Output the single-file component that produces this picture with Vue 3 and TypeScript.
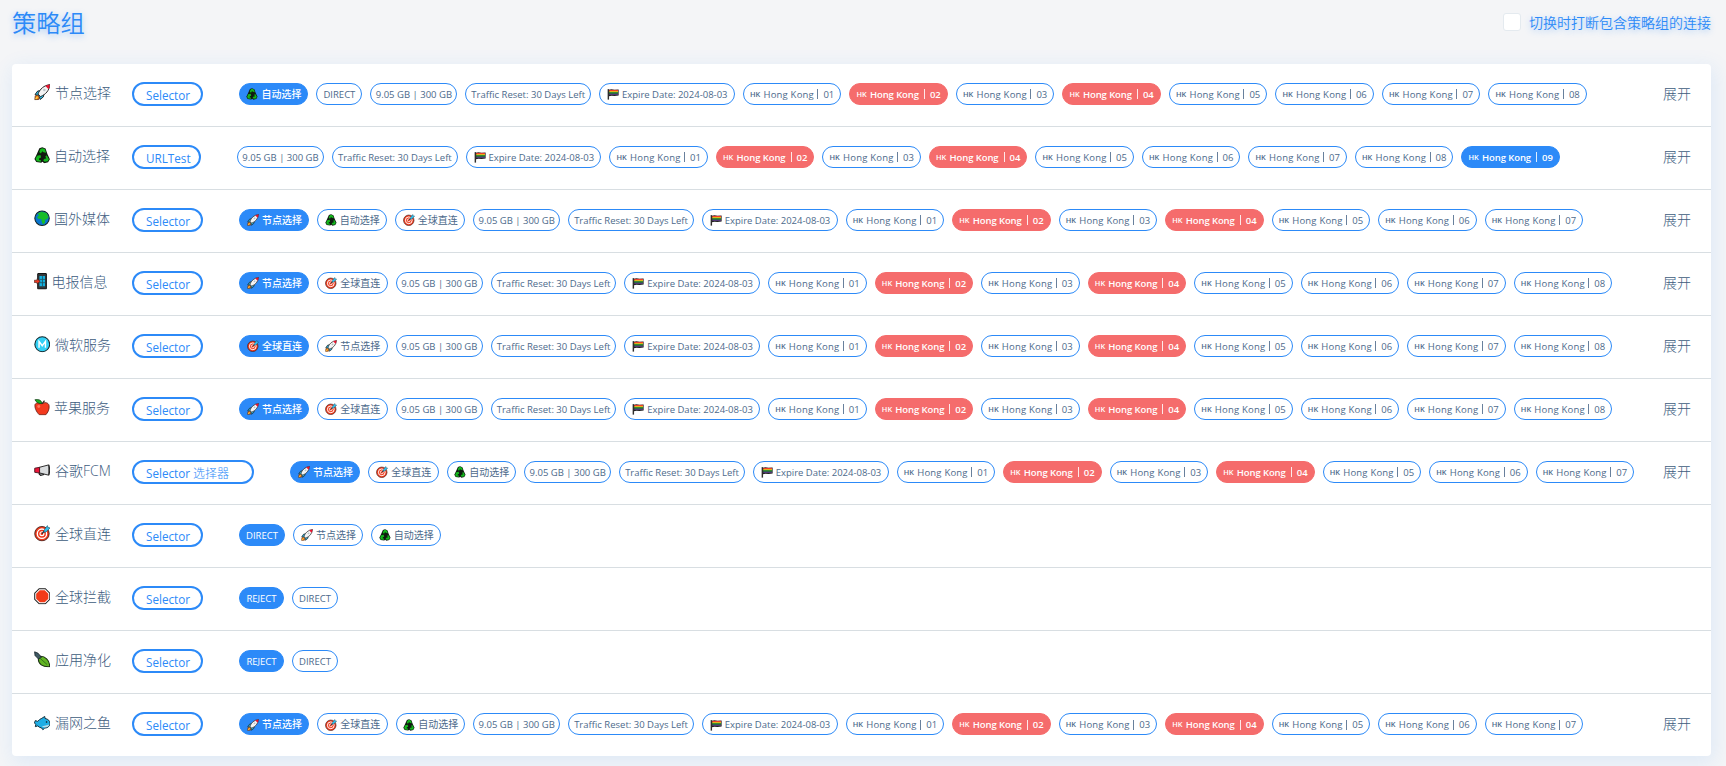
<script setup lang="ts">
type Kind = 'rocket' | 'cycle' | 'target' | 'direct' | 'reject' | 'usage' | 'reset' | 'expire' | 'hk'
interface Proxy { kind: Kind; text: string; state: '' | 'active' | 'error' }
interface Group { icon: string; name: string; type: string; extra?: string; proxies: Proxy[]; more: boolean }

const labels: Record<string, string> = {
  rocket: '节点选择',
  cycle: '自动选择',
  target: '全球直连',
  direct: 'DIRECT',
  reject: 'REJECT',
  usage: '9.05 GB | 300 GB',
  reset: 'Traffic Reset: 30 Days Left',
  expire: 'Expire Date: 2024-08-03',
}
const withIcon: Record<string, string> = { rocket: 'rocket', cycle: 'cycle', target: 'target', expire: 'flag' }

function build(kinds: Kind[], hkCount: number, active: number): Proxy[] {
  const list: Proxy[] = kinds.map((kind) => ({ kind, text: labels[kind], state: '' }))
  for (let i = 1; i <= hkCount; i++) {
    list.push({ kind: 'hk', text: '0' + i, state: i === 2 || i === 4 ? 'error' : '' })
  }
  list[active].state = 'active'
  return list
}
const info: Kind[] = ['usage', 'reset', 'expire']

const groups: Group[] = [
  { icon: 'rocket', name: '节点选择', type: 'Selector', proxies: build(['cycle', 'direct', ...info], 8, 0), more: true },
  { icon: 'cycle', name: '自动选择', type: 'URLTest', proxies: build([...info], 9, 11), more: true },
  { icon: 'globe', name: '国外媒体', type: 'Selector', proxies: build(['rocket', 'cycle', 'target', ...info], 7, 0), more: true },
  { icon: 'phone', name: '电报信息', type: 'Selector', proxies: build(['rocket', 'target', ...info], 8, 0), more: true },
  { icon: 'metro', name: '微软服务', type: 'Selector', proxies: build(['target', 'rocket', ...info], 8, 0), more: true },
  { icon: 'apple', name: '苹果服务', type: 'Selector', proxies: build(['rocket', 'target', ...info], 8, 0), more: true },
  { icon: 'horn', name: '谷歌FCM', type: 'Selector', extra: '选择器', proxies: build(['rocket', 'target', 'cycle', ...info], 7, 0), more: true },
  { icon: 'target', name: '全球直连', type: 'Selector', proxies: build(['direct', 'rocket', 'cycle'], 0, 0), more: false },
  { icon: 'stop', name: '全球拦截', type: 'Selector', proxies: build(['reject', 'direct'], 0, 0), more: false },
  { icon: 'leaf', name: '应用净化', type: 'Selector', proxies: build(['reject', 'direct'], 0, 0), more: false },
  { icon: 'fish', name: '漏网之鱼', type: 'Selector', proxies: build(['rocket', 'target', 'cycle', ...info], 7, 0), more: true },
]
</script>

<template>
  <div class="page">
    <svg class="defs" aria-hidden="true">
      <symbol id="rocket" viewBox="0 0 16 16">
        <path d="M1 10.2 3.6 6.8 7 6.4 9.6 9 9.2 12.4 6 15 5 12 3.8 11z" fill="#2cc3f2" stroke="#1b1b1b" stroke-width=".9" />
        <path d="M3.8 9.8C5.8 4.8 9.6 1.3 15.4.6 14.8 6.2 11.4 10.2 6.4 12.2z" fill="#f3f3f3" stroke="#1b1b1b" stroke-width=".9" />
        <path d="M11 1.9Q13.3.9 15.4.6 15.1 3 14.2 5z" fill="#e8112d" />
        <path d="M1.2 11.4 3.6 11 5.2 12.6 4.6 15 .8 15.2z" fill="#f7811c" stroke="#502a10" stroke-width=".7" />
        <path d="M1.6 14.5 3.4 12.5" stroke="#fde04a" stroke-width="1" />
        <circle cx="10" cy="5.8" r="1.2" fill="#b9c2c8" />
      </symbol>
      <symbol id="cycle" viewBox="0 0 16 16">
        <path d="M5.2 1.2 8 .3l3.2 1.2 1.8 5.2 2.4 5.1-1.7 2.9-3.8 1-1.7-1.5-1.2 1-4.8-.6-1.8-3 1.8-3.6z" fill="#101b10" />
        <g fill="#14b81c">
          <path d="M5 4.9 6.2 1.9 8 1.1l2.4.9 1.4 3.5-2.6-.4L8 4 6.7 6.4z" />
          <path d="M1.5 11.5 3 8.4l3.3-.6.6 2.5-1.8.7-.2 1.5 1.7.2v1.6l-3.9-.4z" />
          <path d="m12.3 8 2.2 3.8-1.2 2.1-3 .4-1.4-1.4 1.4-1.6 1.6-.1-.9-2.1z" />
        </g>
      </symbol>
      <symbol id="globe" viewBox="0 0 16 16">
        <circle cx="7.8" cy="8" r="7" fill="#0875cf" stroke="#102020" stroke-width="1" />
        <path d="M3.3 3.6 7 1.7l5.2 1.2L14.1 7l-1.9 2.3-1.4-.2-.2 3.2-2 1.7-1.2-3-.2-2-2.9-.5L3 7 4.9 5.2z" fill="#16bd27" />
      </symbol>
      <symbol id="target" viewBox="0 0 16 16">
        <circle cx="7.7" cy="8.4" r="7" fill="#f03a1b" stroke="#391a16" stroke-width=".8" />
        <circle cx="7.7" cy="8.4" r="4.5" fill="none" stroke="#fff" stroke-width="1.3" />
        <circle cx="7.7" cy="8.4" r="1.9" fill="none" stroke="#fff" stroke-width="1.1" />
        <path d="m7.7 8.4 4.1-4" stroke="#152b33" stroke-width="1.2" />
        <path d="M9.8 4.8 13 .6l.5 1.8 2.1.4-3.9 4L9.5 7z" fill="#35bdea" stroke="#0e4350" stroke-width=".5" />
      </symbol>
      <symbol id="phone" viewBox="0 0 16 16">
        <rect x="3.6" y=".5" width="8.4" height="15" rx=".8" fill="#34393c" stroke="#151515" />
        <path d="M5.3 3h5.4v9.8H5.3z" fill="#13b0df" />
        <path d="M5.3 6.2h5.4M5.3 9.4h5.4M8.2 3v9.8" stroke="#215261" stroke-width=".8" />
        <path d="M.3 7h2.6V5.6L6 8.1l-3.1 2.5V9.2H.3z" fill="#ef3922" stroke="#43211c" stroke-width=".6" />
      </symbol>
      <symbol id="metro" viewBox="0 0 16 16">
        <circle cx="8" cy="8" r="7.2" fill="#32d0f5" stroke="#11252a" />
        <path d="M4.9 11.3V5.2L8 9.4l3.1-4.2v6.1" fill="none" stroke="#fff" stroke-width="1.4" />
      </symbol>
      <symbol id="apple" viewBox="0 0 16 16">
        <path d="M7.8 4.5C10 3 13.8 3 14.6 6.3c.6 3.8-1.3 7-3.2 9H5.2C2.1 12.5.4 8 1 5.4 2.4 2.8 5.7 3.6 7.8 4.5z" fill="#f33a1e" stroke="#651b12" stroke-width=".8" />
        <path d="M8 4.5Q3 4.8.9.7 6.7-.5 8 4.5z" fill="#16ad20" stroke="#123c15" stroke-width=".7" />
        <path d="M8 4.5 10.2 1.6" stroke="#342019" stroke-width="1.2" />
        <circle cx="4.6" cy="7.3" r="1.4" fill="#ff775c" />
      </symbol>
      <symbol id="horn" viewBox="0 0 16 16">
        <path d="M5 10.3h4.4v1.9l-3 .8L5 11.6z" fill="#a8adb0" stroke="#191919" />
        <path d="M5 5.2 14.3 2.8v10L5 10.5z" fill="#d9dcde" stroke="#222" stroke-width=".9" />
        <path d="M5.4 5.2v5.5L.7 10V6z" fill="#ed1538" stroke="#4d1720" stroke-width=".9" />
        <path d="M14.3 2.8q1.8 5 0 10" fill="#888" stroke="#222" />
      </symbol>
      <symbol id="stop" viewBox="0 0 16 16">
        <path d="M5 .7h6L15.3 5v6L11 15.3H5L.7 11V5z" fill="#fff" stroke="#1d1d1d" />
        <path d="M5.6 2.1h4.8l3.5 3.5v4.8l-3.5 3.5H5.6l-3.5-3.5V5.6z" fill="#f23a18" />
      </symbol>
      <symbol id="leaf" viewBox="0 0 16 16">
        <path d="M5.4 5.2C10.6 4.6 15.2 8.8 15.2 15.2 8.3 15.7 4 12.6 4.2 7.4z" fill="#62b522" stroke="#1d3115" />
        <path d="M.6.8 4 2.2l3.2 4-2.8 1.6L1 4.4z" fill="#405a64" stroke="#162329" stroke-width=".8" />
        <path d="M5 6.3 12.8 13.2" stroke="#2f661b" stroke-width=".8" />
      </symbol>
      <symbol id="fish" viewBox="0 0 16 16">
        <path d="M3.6 6.2Q5.4 3.9 7.6 3.2L10.4 1.4 10.7 3.3Q15.4 4.4 15.6 8.2 15 12.4 10.4 12.7L8.6 14.3 7.4 12.6Q5 12.1 3.6 10.6L1.3 11.3 1.7 9.2.4 7.6 1.3 5.4z" fill="#20aee5" stroke="#102630" stroke-width=".9" />
        <path d="M7.4 11.2 15 9.2Q14 12.1 10.3 12.2z" fill="#b6dce9" />
        <circle cx="12.2" cy="6.8" r=".8" fill="#111" />
      </symbol>
      <symbol id="flag" viewBox="0 0 16 16">
        <path d="M1.8 1.5V15.5" stroke="#302e2c" stroke-width="1.9" />
        <path d="M2.5 2.2 6 1.8l4 .5 5.5-.4v8.2l-5.5.4-4-.3-3.5.9z" fill="#211f20" />
        <path d="M3 3.4h11.7" stroke="#ef3e28" stroke-width="1.7" />
        <path d="M3 5h11.7" stroke="#f6c81b" stroke-width="1.7" />
        <path d="M3 6.7h11.7" stroke="#19a63b" stroke-width="1.7" />
        <path d="M3 8.4h11.7" stroke="#5c3c86" stroke-width="1.5" />
      </symbol>
    </svg>

    <header class="header">
      <h1 class="title">策略组</h1>
      <label class="option"><span class="checkbox"></span><span class="option-text">切换时打断包含策略组的连接</span></label>
    </header>

    <main class="card">
      <section v-for="group in groups" :key="group.name" class="row">
        <div class="name">
          <svg class="name-icon" :class="'icon-' + group.icon"><use :href="'#' + group.icon" /></svg>
          <span>{{ group.name }}</span>
        </div>
        <div class="type" :class="{ long: group.extra, url: group.type === 'URLTest' }">
          {{ group.type }}<span v-if="group.extra" class="extra">{{ group.extra }}</span>
        </div>
        <div class="proxies">
          <div v-for="(proxy, i) in group.proxies" :key="i" class="pill" :class="[proxy.kind, proxy.state]">
            <svg v-if="withIcon[proxy.kind]" class="pill-icon"><use :href="'#' + withIcon[proxy.kind]" /></svg>
            <template v-if="proxy.kind === 'hk'">
              <span class="region">HK</span><span class="place">Hong Kong</span><span class="bar"></span><span>{{ proxy.text }}</span>
            </template>
            <span v-else class="label">{{ proxy.text }}</span>
          </div>
        </div>
        <div v-if="group.more" class="more">展开</div>
      </section>
    </main>
  </div>
</template>

<style>
body {
  background: #f4f5f7;
}
</style>

<style scoped>
.page {
  box-sizing: border-box;
  height: 766px;
  padding: 0 15px 0 12px;
  overflow: hidden;
  background: #f4f5f7;
  color: #4d6a8b;
  font-family: "Open Sans", "Noto Sans", "Noto Sans CJK SC", sans-serif;
  font-weight: 400;
}
.defs {
  display: block;
  width: 0;
  height: 0;
}
.header {
  display: flex;
  justify-content: space-between;
  height: 64px;
  color: #2c8af8;
  text-shadow: 0 2px 6px rgba(44, 138, 248, 0.4);
}
.title {
  margin: 6px 0 0;
  font-family: "Noto Sans CJK SC", sans-serif;
  font-size: 24.3px;
  font-weight: 350;
  line-height: 32px;
}
.option {
  display: flex;
  align-items: center;
  height: 44px;
  font-family: "Noto Sans CJK SC", sans-serif;
  font-size: 14px;
  font-weight: 350;
}
.option-text {
  margin-top: -1px;
}
.checkbox {
  box-sizing: border-box;
  width: 18px;
  height: 18px;
  margin-right: 8px;
  border: 1px solid #e4eaef;
  border-radius: 3px;
  background: #fff;
}
.card {
  border-radius: 4px;
  background: #fff;
  box-shadow: 2px 5px 20px 2px rgba(44, 138, 248, 0.1);
}
.row {
  display: flex;
  align-items: center;
  box-sizing: border-box;
  height: 63px;
  padding: 0 20px 3px 21px;
  border-bottom: 1px solid #d8dee2;
}
.row:last-child {
  height: 62px;
  padding-bottom: 2px;
  border-bottom: 0;
}
.name {
  display: flex;
  align-items: center;
  flex: none;
  width: 99px;
  margin-top: -2px;
  color: #3d5c80;
  font-size: 14px;
  font-weight: 300;
  line-height: 20px;
  white-space: nowrap;
}
.name-icon {
  flex: none;
  width: 16.5px;
  height: 16.5px;
  margin-right: 5px;
  margin-left: 0.5px;
}
.icon-cycle,
.icon-globe,
.icon-apple {
  margin-right: 4px;
}
.icon-phone {
  margin-right: 1.5px;
}
.type {
  box-sizing: border-box;
  flex: none;
  width: 71px;
  height: 24px;
  margin-right: 36px;
  padding-left: 12px;
  border: 2px solid #2c8af8;
  border-radius: 12px;
  color: #2c8af8;
  font-size: 11.7px;
  font-weight: 400;
  line-height: 22px;
  white-space: nowrap;
}
.type.url {
  width: 69px;
}
.type.long {
  width: 122px;
}
.extra {
  margin-left: 3px;
  font-size: 12px;
  font-weight: 300;
}
.proxies {
  display: flex;
  flex: 1;
  gap: 8px;
}
.pill {
  display: flex;
  align-items: center;
  justify-content: center;
  box-sizing: border-box;
  flex: none;
  height: 22px;
  padding-top: 1px;
  border: 1px solid #2c8af8;
  border-radius: 11px;
  font-size: 9.5px;
  line-height: 19px;
  white-space: nowrap;
}
.active {
  background: #2c8af8;
  color: #fff;
}
.error {
  border-color: #f56c6c;
  background: #f56c6c;
  color: #fff;
}
.pill-icon {
  flex: none;
  width: 12px;
  height: 12px;
  margin-right: 3px;
  margin-left: 0.5px;
}
.rocket,
.target {
  width: 70.4px;
}
.cycle {
  width: 69.4px;
}
.rocket,
.target,
.cycle {
  font-size: 10px;
}
.rocket.active,
.target.active,
.cycle.active {
  font-weight: 500;
}
.direct {
  width: 46px;
}
.reject {
  width: 45px;
}
.usage {
  width: 87px;
}
.reset {
  width: 125.7px;
}
.expire {
  width: 135.8px;
}
.hk {
  width: 98.5px;
}
.region {
  width: 10.5px;
  margin-right: 3px;
  font-size: 7.4px;
  font-weight: 600;
  line-height: 21px;
}
.place {
  width: 49px;
  letter-spacing: 0.2px;
}
.hk.active,
.hk.error {
  font-weight: 600;
}
.hk.active .place,
.hk.error .place {
  letter-spacing: -0.1px;
}
.bar {
  width: 1px;
  height: 10px;
  margin: 0 5px;
  background: currentColor;
  opacity: 0.85;
}
.more {
  flex: none;
  margin-top: -2px;
  color: #3d5c80;
  font-size: 14px;
  font-weight: 300;
}
</style>
